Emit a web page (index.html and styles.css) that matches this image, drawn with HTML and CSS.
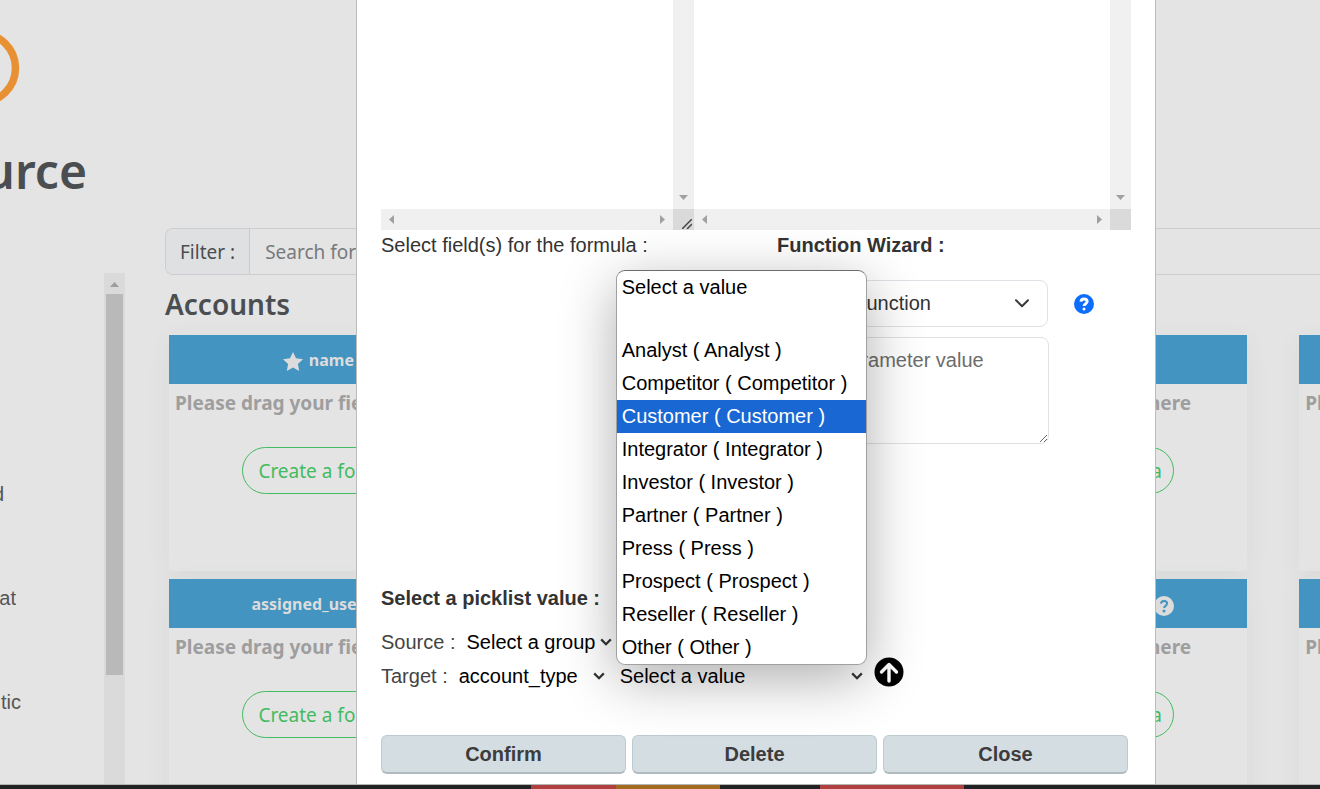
FILE: index.html
```html
<!DOCTYPE html>
<html lang="en">
<head>
<meta charset="utf-8">
<title>Field mapping</title>
<link rel="stylesheet" href="styles.css">
</head>
<body>
<svg class="defs" aria-hidden="true">
  <symbol id="chevron" viewBox="0 0 12 8"><path d="M1.2 1.4 6 6.2 10.8 1.4" fill="none" stroke="currentColor" stroke-width="2.200"/></symbol>
  <symbol id="arrow-down" viewBox="0 0 9 5"><path d="M0 0h9L4.500 5z"/></symbol>
  <symbol id="arrow-up" viewBox="0 0 9 5"><path d="M0 5h9L4.500 0z"/></symbol>
  <symbol id="arrow-left" viewBox="0 0 5 9"><path d="M5 0v9L0 4.500z"/></symbol>
  <symbol id="arrow-right" viewBox="0 0 5 9"><path d="M0 0v9l5-4.500z"/></symbol>
  <symbol id="question" viewBox="0 0 20 20"><circle cx="10" cy="10" r="10" fill="currentColor" stroke="none"/><path d="M7 7.600C7.200 5.900 8.300 5.100 10 5.100c1.800 0 3.100.9 3.100 2.500 0 2.300-3 2.200-3 4.400" fill="none"/><circle cx="10" cy="15" r="1.500" stroke="none"/></symbol>
</svg>
<div class="page">
  <div class="workspace">
    <aside class="sidebar">
      <svg class="logo" viewBox="0 0 20 80" aria-hidden="true"><circle cx="-19" cy="40" r="34.500" fill="none" stroke="#e79134" stroke-width="7.500"/></svg>
      <h1 class="source-title">urce</h1>
      <div class="source-list">
        <div class="source-items">
          <p class="item item-narrow">d</p>
          <p class="item item-medium">at</p>
          <p class="item item-wide">tic</p>
        </div>
        <div class="track">
          <svg class="tri-v" aria-hidden="true"><use href="#arrow-up"/></svg>
          <div class="thumb"></div>
        </div>
      </div>
    </aside>
    <main class="content">
      <div class="filter">
        <label class="filter-label" for="filter">Filter :</label>
        <input class="filter-input" id="filter" type="text" placeholder="Search for">
      </div>
      <h2 class="module">Accounts</h2>
      <div class="cards">
        <section class="card">
          <h3 class="card-head"><svg class="star" viewBox="0 0 20 19" aria-hidden="true"><path d="M10 0l3 6.300 7 .9-5.100 4.800 1.300 6.900L10 15.600 3.800 18.900l1.300-6.900L0 7.200l7-.9z" fill="currentColor"/></svg>name<svg class="tip" aria-hidden="true"><use href="#question"/></svg></h3>
          <p class="hint">Please drag your fields here</p>
          <button class="create" type="button">Create a formula</button>
        </section>
        <section class="card"><div class="card-head"></div></section>
        <section class="card">
          <div class="card-head"></div>
          <p class="hint">Please drag your fields here</p>
          <button class="create" type="button">Create a formula</button>
        </section>
        <section class="card">
          <div class="card-head"></div>
          <p class="hint">Please drag your fields here</p>
        </section>
        <section class="card">
          <h3 class="card-head">assigned_user_id<svg class="tip" aria-hidden="true"><use href="#question"/></svg></h3>
          <p class="hint">Please drag your fields here</p>
          <button class="create" type="button">Create a formula</button>
        </section>
        <section class="card"><div class="card-head"></div></section>
        <section class="card">
          <h3 class="card-head head-end"><svg class="tip" aria-hidden="true"><use href="#question"/></svg></h3>
          <p class="hint">Please drag your fields here</p>
          <button class="create" type="button">Create a formula</button>
        </section>
        <section class="card">
          <div class="card-head"></div>
          <p class="hint">Please drag your fields here</p>
        </section>
      </div>
    </main>
    <div class="modal" role="dialog" aria-label="Formula">
      <div class="panes">
        <div class="pane">
          <div class="pane-body"></div>
          <div class="vbar"><svg class="tri-v" aria-hidden="true"><use href="#arrow-down"/></svg></div>
          <div class="hbar"><svg class="tri-h" aria-hidden="true"><use href="#arrow-left"/></svg><svg class="tri-h" aria-hidden="true"><use href="#arrow-right"/></svg></div>
          <div class="corner"><svg class="grip" viewBox="0 0 10 10" aria-hidden="true"><path d="M0 10 10 0M5 10l5-5" fill="none" stroke="#444" stroke-width="1.500"/></svg></div>
        </div>
        <div class="pane">
          <div class="pane-body"></div>
          <div class="vbar"><svg class="tri-v" aria-hidden="true"><use href="#arrow-down"/></svg></div>
          <div class="hbar"><svg class="tri-h" aria-hidden="true"><use href="#arrow-left"/></svg><svg class="tri-h" aria-hidden="true"><use href="#arrow-right"/></svg></div>
          <div class="corner"></div>
        </div>
      </div>
      <div class="editor">
        <p class="text">Select field(s) for the formula :</p>
        <div class="wizard">
          <h3 class="label wizard-title">Function Wizard :</h3>
          <div class="wizard-row">
            <span class="pick pick-box">
              <select class="function" aria-label="Function"><option>Select a function</option></select>
              <svg class="chev-large" viewBox="0 0 14 9" aria-hidden="true"><path d="M1 1.200l6 6 6-6" fill="none" stroke="#343a40" stroke-width="2" stroke-linecap="round" stroke-linejoin="round"/></svg>
            </span>
            <svg class="help" role="img" aria-label="Help"><use href="#question"/></svg>
          </div>
          <textarea class="parameter" aria-label="Parameter" placeholder="Select parameter value"></textarea>
        </div>
      </div>
      <h3 class="label">Select a picklist value :</h3>
      <div class="line line-source">
        <label class="text" for="source">Source :</label>
        <span class="pick pick-group">
          <select id="source"><option>Select a group</option></select>
          <svg class="chev" aria-hidden="true"><use href="#chevron"/></svg>
        </span>
      </div>
      <div class="line">
        <label class="text" for="target">Target :</label>
        <span class="pick pick-type">
          <select id="target"><option>account_type</option></select>
          <svg class="chev" aria-hidden="true"><use href="#chevron"/></svg>
        </span>
        <span class="pick pick-value">
          <select aria-label="Value"><option>Select a value</option></select>
          <svg class="chev" aria-hidden="true"><use href="#chevron"/></svg>
          <ul class="menu" role="listbox" aria-label="Values">
            <li class="option" role="option">Select a value</li>
            <li class="blank" role="presentation"></li>
            <li class="option" role="option">Analyst ( Analyst )</li>
            <li class="option" role="option">Competitor ( Competitor )</li>
            <li class="option active" role="option" aria-selected="true">Customer ( Customer )</li>
            <li class="option" role="option">Integrator ( Integrator )</li>
            <li class="option" role="option">Investor ( Investor )</li>
            <li class="option" role="option">Partner ( Partner )</li>
            <li class="option" role="option">Press ( Press )</li>
            <li class="option" role="option">Prospect ( Prospect )</li>
            <li class="option" role="option">Reseller ( Reseller )</li>
            <li class="option" role="option">Other ( Other )</li>
          </ul>
        </span>
        <button class="insert" type="button" aria-label="Insert value"><svg viewBox="0 0 30 30" aria-hidden="true"><circle cx="15" cy="15" r="14.500"/><path d="M15 24V8M7.500 15 15 7.500l7.500 7.500" fill="none" stroke="#fff" stroke-width="3.400" stroke-linecap="round" stroke-linejoin="round"/></svg></button>
      </div>
      <div class="actions">
        <button class="action" type="button">Confirm</button>
        <button class="action" type="button">Delete</button>
        <button class="action" type="button">Close</button>
      </div>
    </div>
  </div>
  <div class="strip"><i class="seg-lead"></i><i class="seg-red-a"></i><i class="seg-gold"></i><i class="seg-dark"></i><i class="seg-red-b"></i></div>
</div>
</body>
</html>
```
FILE: styles.css
```css
* { box-sizing: border-box; margin: 0; padding: 0; }
body {
  background: #e4e4e4;
  color: #333;
  font: 20px/30px "Liberation Sans", Arial, sans-serif;
  overflow: hidden;
}
button, input, select, textarea { font: inherit; color: inherit; }
svg { display: block; }
.defs { position: absolute; width: 0; height: 0; }

.page { display: flex; flex-direction: column; height: 100vh; }
.workspace { position: relative; display: flex; flex: 1; min-height: 0; overflow: hidden; }

/* Source column */
.sidebar { display: flex; flex-direction: column; flex: none; width: 125px; padding-top: 28px; }
.logo { width: 20px; height: 80px; }
.source-title {
  display: flex;
  justify-content: flex-end;
  width: 87px;
  margin: 33px 0 44px;
  overflow: hidden;
  color: #4a4e51;
  font: 600 48px/60px "Noto Sans", "Open Sans", sans-serif;
}
.source-list { display: flex; flex: 1; justify-content: space-between; margin-top: 28px; min-height: 0; }
.source-items { display: flex; flex-direction: column; gap: 74px; padding-top: 206px; }
.item { display: flex; justify-content: flex-end; overflow: hidden; color: #555; }
.item-narrow { width: 4px; }
.item-medium { width: 16px; }
.item-wide { width: 21px; }
.track { display: flex; flex-direction: column; align-items: center; width: 21px; background: #dadada; fill: #9d9d9d; }
.track .tri-v { margin: 9px 0 7px; }
.thumb { width: 17px; height: 381px; background: #b9b9b9; }
.tri-v { flex: none; width: 9px; height: 5px; }
.tri-h { flex: none; width: 5px; height: 9px; }

/* Target fields */
.content { flex: 1; min-width: 0; padding: 228px 0 0 40px; font-family: "Noto Sans", "Open Sans", sans-serif; }
.filter {
  display: flex;
  height: 47px;
  border: 1px solid #cbcdd0;
  border-right: 0;
  border-radius: 8px 0 0 8px;
  overflow: hidden;
  font-size: 19px;
}
.filter-label { flex: none; padding: 8px 14px; border-right: 1px solid #c9cdd1; background: #dee0e2; color: #4a4e51; }
.filter-input { flex: 1; min-width: 0; padding: 0 15px; border: 0; background: none; }
.filter-input::placeholder { color: #777a7c; opacity: 1; }
.module { color: #4a4e51; font-size: 28px; font-weight: 600; line-height: 36px; margin: 11px 0 13px; }
.cards {
  display: grid;
  grid-template-columns: repeat(4, 1fr);
  gap: 8px 52px;
  width: calc(100% + 304px);
  padding-left: 4px;
}
.card { display: flex; flex-direction: column; align-items: center; height: 236px; box-shadow: 0 6px 24px rgba(60, 80, 80, .06); }
.card-head {
  display: flex;
  align-items: center;
  justify-content: center;
  gap: 6px;
  align-self: stretch;
  height: 49px;
  background: #4394c0;
  color: #dcdcdc;
  font-size: 16px;
  font-weight: 700;
}
.card-head svg { margin-top: 4px; }
.head-end { justify-content: flex-end; padding-right: 73px; }
.star { width: 20px; height: 19px; }
.tip { width: 20px; height: 20px; stroke: #4394c0; stroke-width: 2px; fill: #4394c0; }
.hint { align-self: stretch; padding: 4px 6px 0; color: #9e9e9e; font-size: 19px; font-weight: 700; white-space: nowrap; }
.create {
  width: 178px;
  height: 47px;
  margin-top: 29px;
  padding-left: 15px;
  border: 1px solid #43bb60;
  border-radius: 24px;
  background: none;
  color: #43bb60;
  font-size: 19px;
  text-align: left;
  white-space: nowrap;
}

/* Formula dialog */
.modal {
  position: absolute;
  inset: 0 164px 0 356px;
  display: flex;
  flex-direction: column;
  padding: 0 24px;
  border: solid #bcbcbc;
  border-width: 0 1px;
  background: #fff;
}
.panes { display: grid; grid-template-columns: 313fr 437fr; height: 230px; }
.pane { display: grid; grid-template: 1fr 21px / 1fr 21px; fill: #a0a0a0; }
.vbar { display: flex; align-items: flex-end; justify-content: center; padding-bottom: 9px; background: #f0f0f0; }
.hbar { display: flex; align-items: center; justify-content: space-between; padding: 0 8px; background: #f0f0f0; }
.corner { display: flex; align-items: flex-end; justify-content: flex-end; padding: 1px 2px; background: #dadada; }
.grip { width: 10px; height: 10px; }
.editor { display: flex; justify-content: space-between; height: 353px; }
.wizard { width: 364px; }
.label { font-size: 20px; font-weight: 700; }
.wizard-title { padding-left: 10px; }
.wizard-row { display: flex; align-items: center; gap: 26px; margin: 20px 0 10px; }
.pick { position: relative; display: grid; align-items: center; }
.pick > select, .pick > svg { grid-area: 1 / 1; }
.pick > select { appearance: none; width: 100%; height: 26px; padding-left: 4px; border: 0; background: none; color: #000; line-height: 26px; }
.pick > svg { justify-self: end; pointer-events: none; }
.pick-box { width: 281px; }
.pick > .function { height: 47px; padding: 0 15px 2px; border: 1px solid #dee2e6; border-radius: 8px; color: #333; }
.chev-large { width: 14px; height: 9px; margin-right: 19px; }
.help { width: 20px; height: 20px; color: #0d6efd; stroke: #fff; stroke-width: 3px; fill: #fff; }
.parameter { display: block; width: 282px; height: 107px; padding: 7px 10px; border: 1px solid #dee2e6; border-radius: 8px; resize: both; }
.parameter::placeholder { color: #6c6c6c; opacity: 1; }
.chev { width: 12px; height: 8px; margin-right: 4px; }
.line { display: flex; align-items: center; height: 34px; }
.line-source { margin-top: 12px; }
.line .text { color: #444; }
.pick-group { width: 154px; margin-left: 7px; }
.pick-type { width: 154px; margin: 0 7px 0 7px; }
.pick-value { width: 251px; }
.insert { width: 30px; height: 30px; margin: 0 0 8px 7px; border: 0; background: none; }

.menu {
  position: absolute;
  bottom: calc(100% - 2px);
  left: 0;
  width: 251px;
  border: 1px solid #a0a0a0;
  border-top-color: #6c6c6c;
  border-radius: 9px;
  background: #fff;
  box-shadow: 0 14px 56px rgba(0, 0, 0, .32);
  color: #000;
  line-height: 33px;
  list-style: none;
  white-space: nowrap;
}
.option { padding-left: 5px; }
.blank { height: 30px; }
.active { background: #1967d2; color: #fff; }

.actions { display: grid; grid-template-columns: repeat(3, 1fr); gap: 6px; margin-top: 42px; padding-right: 3px; }
.action {
  height: 39px;
  border: 1px solid #bccbd0;
  border-bottom: 2px solid #b0bbc0;
  border-radius: 6px;
  background: #d4dde2;
  color: #3c3c3c;
  font-weight: 700;
}

.strip { display: flex; height: 5px; border-top: 1px solid #b4b6b6; background: #202224; }
.seg-lead { width: 531px; }
.seg-red-a { width: 85px; background: #b04040; }
.seg-gold { width: 104px; background: #a46a20; }
.seg-dark { width: 100px; }
.seg-red-b { width: 144px; background: #b04040; }
```
